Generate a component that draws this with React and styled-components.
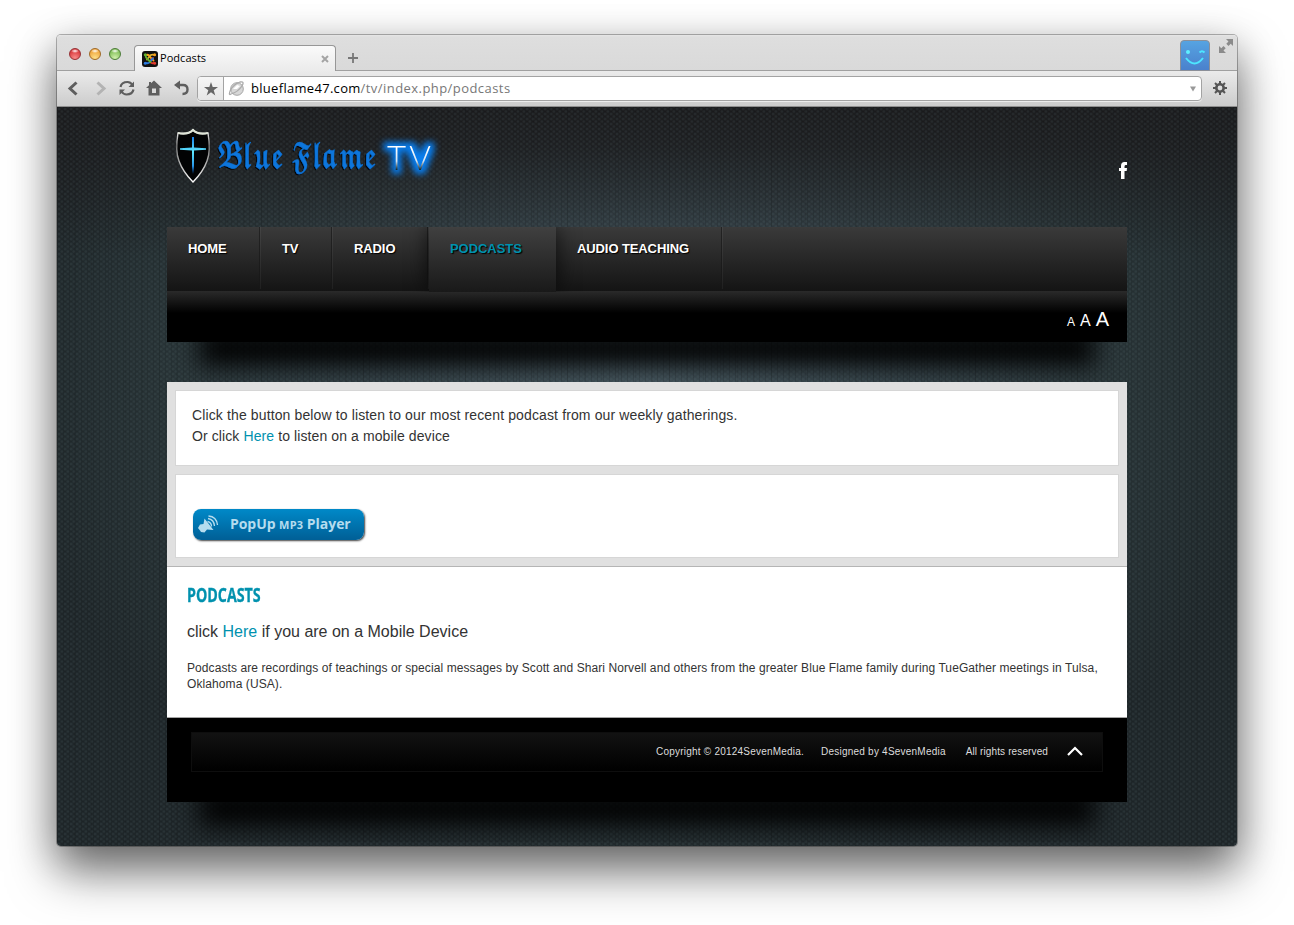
import React from "react";
import styled, { createGlobalStyle, css } from "styled-components";

const Global = createGlobalStyle`
  * { box-sizing: border-box; }
  html, body { margin: 0; background: #fff; }
  body { font-family: "Liberation Sans", Arial, sans-serif; overflow: hidden; }
  a { color: #0091ae; text-decoration: none; }
  p, h2 { margin: 0; }
`;

const Desktop = styled.div`
  width: 1294px;
  height: 925px;
  padding: 35px 57px 0;
  overflow: hidden;
`;

const Window = styled.div`
  width: 1180px;
  height: 811px;
  border-radius: 4px;
  overflow: hidden;
  display: flex;
  flex-direction: column;
  box-shadow: 0 0 0 1px rgba(0, 0, 0, 0.28), 0 26px 48px rgba(0, 0, 0, 0.5), 0 10px 40px rgba(0, 0, 0, 0.24);
`;

const TabStrip = styled.div`
  display: flex;
  align-items: flex-end;
  height: 36px;
  padding: 0 9px 0 12px;
  background: linear-gradient(#e6e6e6 0, #dedede 2px, #d9d9d9 100%);
  box-shadow: inset 0 -1px #a0a0a0;
`;

const Lights = styled.div`
  display: flex;
  gap: 8px;
  margin-bottom: 11px;
`;

const tints = {
  red: ["#f98c8a", "#d9363a", "#963034"],
  amber: ["#fde08a", "#f0a43a", "#a06a26"],
  green: ["#d2f1ae", "#7fbd55", "#4c7d38"],
};

const Light = styled.span`
  width: 12px;
  height: 12px;
  border-radius: 50%;
  border: 1px solid ${(p) => tints[p.$tint][2]};
  background: radial-gradient(ellipse 4px 2px at 50% 20%, #fff 0, transparent 100%),
    radial-gradient(circle at 50% 90%, ${(p) => tints[p.$tint][0]}, ${(p) => tints[p.$tint][1]} 75%);
`;

const Tab = styled.div`
  display: flex;
  align-items: center;
  width: 202px;
  height: 26px;
  margin-left: 13px;
  padding: 0 6px 0 7px;
  border: 1px solid #979797;
  border-bottom: 0;
  border-radius: 4px 4px 0 0;
  background: linear-gradient(#fafafa, #ebebeb);
  font: 11px/16px "Open Sans", "Noto Sans", sans-serif;
  letter-spacing: 0.05px;
  color: #000;
`;

const TabTitle = styled.span`
  flex: 1;
  margin: -2px 0 0 2px;
`;

const NewTab = styled.svg`
  margin: 0 auto 7px 12px;
`;

const Wink = styled.svg`
  margin-right: 9px;
`;

const Expand = styled.svg`
  margin: 0 -6px 17px 0;
`;

const Toolbar = styled.div`
  display: flex;
  align-items: center;
  height: 36px;
  padding: 0 10px 1px;
  background: linear-gradient(#ebebeb, #cbcbcb);
  box-shadow: inset 0 -1px #8e8e8e;
`;

const NavIcons = styled.svg`
  flex: none;
  margin: -2px 1px 0 -1px;
`;

const Address = styled.div`
  display: flex;
  align-items: center;
  width: 1005px;
  height: 25px;
  margin: 0 11px 0 2px;
  border: 1px solid #a3a3a3;
  border-radius: 4px;
  background: #fff;
  box-shadow: 0 1px rgba(255, 255, 255, 0.6);
`;

const Bookmark = styled.span`
  display: flex;
  align-items: center;
  justify-content: center;
  width: 26px;
  height: 23px;
  border-right: 1px solid #a3a3a3;
  border-radius: 3px 0 0 3px;
  background: linear-gradient(#f6f6f6, #e6e6e6);
`;

const Url = styled.span`
  flex: 1;
  margin: -2px 0 0 5px;
  font: 13px/18px "Open Sans", "Noto Sans", sans-serif;
  letter-spacing: 0.44px;
  color: #777;
  b { font-weight: 400; color: #000; letter-spacing: 0.3px; }
`;

const Page = styled.div`
  flex: 1;
  padding: 0 110px;
  background:
    radial-gradient(ellipse 2.5px 2px at 2px 2px, rgba(130, 160, 165, 0.16), transparent) 0 0 / 6px 5px,
    radial-gradient(ellipse 2.5px 2px at 2px 2px, rgba(130, 160, 165, 0.16), transparent) 3px 2.5px / 6px 5px,
    repeating-linear-gradient(90deg, rgba(0, 0, 0, 0.12) 0 1px, transparent 1px 6px),
    repeating-linear-gradient(90deg, rgba(0, 0, 0, 0.07) 0 1px, transparent 1px 17px),
    linear-gradient(#1a1a1c 0, rgba(26, 26, 28, 0.88) 40px, rgba(26, 26, 28, 0) 150px),
    radial-gradient(ellipse 640px 500px at 50% 270px, #43535b 0, #323f45 40%, #263134 75%, #1d2427 100%);
`;

const Header = styled.header`
  display: flex;
  justify-content: space-between;
  height: 120px;
`;

const Logo = styled.svg`
  margin: 14px 0 0;
  overflow: visible;
`;

const Facebook = styled.svg`
  margin-top: 55px;
`;

const NavBar = styled.nav`
  display: flex;
  height: 64px;
  background: linear-gradient(#3a3a3a, #141414);
`;

const NavItem = styled.a`
  position: relative;
  width: ${(p) => p.$w}px;
  height: 64px;
  padding: 14px 0 0 21px;
  font-size: 13px;
  line-height: 15px;
  letter-spacing: -0.1px;
  font-weight: 700;
  color: #fff;
  text-shadow: 1px 1px 1px #000;
  ${(p) =>
    p.$active
      ? css`
          z-index: 1;
          height: 65px;
          color: #0091ae;
          letter-spacing: -0.05px;
          background: linear-gradient(#404040, #191919);
          box-shadow: 0 0 22px rgba(0, 0, 0, 0.75);
          clip-path: inset(0 -30px 0 -30px);
        `
      : css`
          background:
            linear-gradient(#232323, #161616) right 1px top / 1px 62px no-repeat,
            linear-gradient(#444, #202020) right top / 1px 62px no-repeat;
        `}
`;

const SubBar = styled.div`
  display: flex;
  align-items: baseline;
  justify-content: flex-end;
  gap: 5px;
  height: 51px;
  padding: 17px 18px 0 0;
  background: linear-gradient(#2a2a2a, #000 22px);
  color: #fff;
`;

const SizeLetter = styled.span`
  font-size: ${(p) => p.$size}px;
  line-height: 22px;
`;

const Shade = styled.div`
  height: 40px;
  overflow: hidden;
  &::before {
    content: "";
    display: block;
    height: 20px;
    margin: -20px 40px 0;
    box-shadow: 0 16px 24px 8px rgba(0, 0, 0, 0.95);
  }
`;

const Showcase = styled.section`
  display: flex;
  flex-direction: column;
  gap: 8px;
  height: 185px;
  padding: 8px;
  background: #e0e0e0;
  border-bottom: 1px solid #b5b5b5;
`;

const Card = styled.div`
  height: ${(p) => p.$h}px;
  padding: ${(p) => p.$pad};
  border: 1px solid #d6d6d6;
  background: #fff;
  font-size: 14px;
  line-height: 21px;
  letter-spacing: 0.125px;
  color: #333;
  p + p { letter-spacing: 0.1px; }
`;

const Player = styled.button`
  display: flex;
  align-items: center;
  width: 171px;
  height: 31px;
  padding: 0 0 2px 5px;
  border: 0;
  border-radius: 8px;
  background: linear-gradient(#0089c8, #005f96);
  box-shadow: 1px 1px 2px rgba(0, 0, 0, 0.75);
  color: #b5dcee;
  font: 700 14px "Open Sans", sans-serif;
  letter-spacing: -0.05px;
  white-space: nowrap;
  svg { margin-right: 11px; }
  small { font-size: 11px; letter-spacing: 0.2px; }
`;

const Article = styled.main`
  height: 151px;
  padding: 16px 20px 0;
  background: #fff;
  border-bottom: 1px solid #a5a5a5;
  color: #333;
`;

const Title = styled.h2`
  width: 110px;
  font: 700 19px/24px "Open Sans", sans-serif;
  -webkit-text-stroke: 0.3px #0091ae;
  color: #0091ae;
  transform: scaleX(0.75);
  transform-origin: left;
`;

const Lead = styled.p`
  margin-top: 15px;
  font-size: 16px;
  line-height: 20px;
`;

const Body = styled.p`
  margin-top: 18px;
  font-size: 12px;
  line-height: 16px;
  letter-spacing: 0.087px;
`;

const Footer = styled.footer`
  height: 84px;
  padding: 14px 24px 0;
  background: #000;
`;

const FooterBox = styled.div`
  display: flex;
  align-items: center;
  justify-content: flex-end;
  height: 40px;
  padding: 0 19px 2px 0;
  border: 1px solid #0e0e0e;
  background: linear-gradient(#121212, #000);
  color: #ddd;
  font-size: 10px;
  white-space: nowrap;
`;

const Note = styled.span`
  margin-right: ${(p) => p.$gap}px;
  letter-spacing: ${(p) => p.$track}px;
`;

const nav = [
  ["HOME", 94],
  ["TV", 72],
  ["RADIO", 96],
  ["PODCASTS", 127, true],
  ["AUDIO TEACHING", 167],
];

export default function App() {
  return (
    <Desktop>
      <Global />
      <Window>
        <TabStrip>
          <Lights>
            <Light $tint="red" />
            <Light $tint="amber" />
            <Light $tint="green" />
          </Lights>
          <Tab>
            <svg width="16" height="16" viewBox="0 0 16 16">
              <rect width="16" height="16" rx="3" fill="#111" />
              <g fill="none" strokeWidth="1.800" strokeLinecap="round">
                <path d="M3.500 4Q7 3 8 6l3.500 3.500" stroke="#f9a01b" />
                <path d="M12.500 4Q9 3 7.500 5.500L5 8.500" stroke="#e2b22e" />
                <path d="M12.500 12Q9 13 8 10.500L11 7" stroke="#e23a2e" />
                <path d="M3.500 12Q7 13 8 10.500l3-3" stroke="#2d7be0" />
                <path d="M3.500 4Q3.500 7 5.500 8l3 3" stroke="#62b22f" />
              </g>
              <circle cx="3.300" cy="3.800" r="1.500" fill="#62b22f" />
              <circle cx="12.600" cy="3.800" r="1.500" fill="#f9a01b" />
              <circle cx="3.300" cy="12.200" r="1.500" fill="#2d7be0" />
              <circle cx="12.600" cy="12.200" r="1.500" fill="#e23a2e" />
            </svg>
            <TabTitle>Podcasts</TabTitle>
            <svg width="8" height="8" viewBox="0 0 8 8">
              <path d="M1 1l6 6M7 1l-6 6" stroke="#a4a4a4" strokeWidth="2" />
            </svg>
          </Tab>
          <NewTab width="10" height="12" viewBox="0 0 10 12">
            <path d="M5 1v10M0 6h10" stroke="#777" strokeWidth="1.800" />
          </NewTab>
          <Wink width="30" height="31" viewBox="0 0 30 31">
            <defs>
              <linearGradient id="wink" x2="0" y2="1">
                <stop stopColor="#56a4e2" />
                <stop offset="1" stopColor="#4a80cc" />
              </linearGradient>
            </defs>
            <path d="M.5 30.500V4q0-3.500 3.500-3.500h22q3.500 0 3.500 3.500v26.500z" fill="url(#wink)" stroke="#8b8f98" />
            <circle cx="8" cy="12" r="2" fill="#5ff0ff" />
            <path d="M19.500 12.500q2.500-2.500 5 0M6 18q8.500 11 17 0" fill="none" stroke="#4de6ff" strokeWidth="2" />
          </Wink>
          <Expand width="15" height="15" viewBox="0 0 15 15" fill="#8b8b8b">
            <path d="M7 0h7v7l-2.300-2.300-2.200 2.200-2.200-2.200 2.200-2.200zM0 7l2.300 2.300 2.200-2.200 2.200 2.200-2.200 2.200L7 14H0z" />
          </Expand>
        </TabStrip>

        <Toolbar>
          <NavIcons width="128" height="20" viewBox="0 0 128 20" fill="none" strokeWidth="3">
            <path d="M10.500 4.500L4 10.500l6.500 6" stroke="#5e5e5e" />
            <path d="M31.500 4.500L38 10.500l-6.500 6" stroke="#b3b3b3" />
            <g stroke="#5e5e5e" strokeWidth="2.200">
              <path d="M54.500 9q1-5 7-5 3 0 5 3M67.500 11.500q-1 5-7 5-3 0-5-3" />
              <path d="M68 3.500V9h-5.500zM53.500 17v-5.500H59z" fill="#5e5e5e" stroke="none" />
            </g>
            <path
              d="M88 2.500l8 7.500h-2.500v7.500h-11V10H80l3-2.800V4h2v1.300zM86 10.500v4.500h4v-4.500z"
              fill="#5e5e5e"
              fillRule="evenodd"
            />
            <path d="M112 7h5q4.500 0 4.500 4.500t-5 4.500" stroke="#5e5e5e" strokeWidth="2.400" />
            <path d="M108 7l6-4.500v9z" fill="#5e5e5e" />
          </NavIcons>
          <Address>
            <Bookmark>
              <svg width="14" height="14" viewBox="0 0 14 14">
                <path d="M7 0l1.700 5H14L9.700 8.200l1.600 5.300L7 10.300l-4.300 3.200 1.600-5.300L0 5h5.300z" fill="#666" />
              </svg>
            </Bookmark>
            <svg width="22" height="18" viewBox="0 0 22 18">
              <circle cx="13" cy="9" r="6.300" fill="#d7d7d7" stroke="#a5a5a5" />
              <path d="M7 14Q4 16 6.500 10 10 4 16 2q5-1 2 4-4 6-11 8z" fill="none" stroke="#aaa" strokeWidth="1.300" />
              <path d="M9 9l4-4 3 1-3 3z" fill="#fff" />
            </svg>
            <Url>
              <b>blueflame47.com</b>/tv/index.php/podcasts
            </Url>
            <svg width="12" height="8" viewBox="0 0 12 8">
              <path d="M1 1.500h6L4 6.500z" fill="#999" />
            </svg>
          </Address>
          <svg width="14" height="16" viewBox="0 0 14 16" fill="none" stroke="#555">
            <circle cx="7" cy="7" r="3.700" strokeWidth="2.600" />
            <path
              d="M7 0v3M7 11v3M0 7h3M11 7h3M2 2l2.200 2.200M9.800 9.800L12 12M12 2L9.800 4.200M4.200 9.800L2 12"
              strokeWidth="2"
            />
          </svg>
        </Toolbar>

        <Page>
          <Header>
            <Logo width="280" height="70" viewBox="0 0 280 70">
              <defs>
                <linearGradient id="rim" x2="0" y2="1">
                  <stop stopColor="#fff" />
                  <stop offset=".3" stopColor="#777" />
                  <stop offset=".6" stopColor="#aaa" />
                  <stop offset="1" stopColor="#fff" />
                </linearGradient>
                <linearGradient id="cross" x2="0" y2="1">
                  <stop stopColor="#167ce8" />
                  <stop offset=".4" stopColor="#5fe9ff" />
                  <stop offset="1" stopColor="#0868dd" />
                </linearGradient>
                <linearGradient id="tv" x1="0" x2="0" y1="27" y2="49" gradientUnits="userSpaceOnUse">
                  <stop stopColor="#fff" />
                  <stop offset=".6" stopColor="#d5e4f2" />
                  <stop offset="1" stopColor="#122" />
                </linearGradient>
                <filter id="glow" x="-40%" y="-60%" width="180%" height="220%" colorInterpolationFilters="sRGB">
                  <feMorphology in="SourceAlpha" operator="dilate" radius="4" />
                  <feGaussianBlur stdDeviation="3.200" result="halo" />
                  <feFlood floodColor="#087ef0" />
                  <feComposite in2="halo" operator="in" />
                  <feMerge>
                    <feMergeNode />
                    <feMergeNode in="SourceGraphic" />
                  </feMerge>
                </filter>
                <filter id="ink" x="-10%" y="-10%" width="120%" height="120%">
                  <feDropShadow dx="-1" dy="1" stdDeviation=".7" floodColor="#000" floodOpacity=".9" />
                </filter>
              </defs>
              <path
                d="M26 9q-5 5-15 3-3 18 1 28 4 11 14 21 10-10 14-21 4-10 1-28-10 2-15-3z"
                fill="#020304"
                stroke="url(#rim)"
                strokeWidth="1.400"
              />
              <path d="M11 12q10 2 15-3 5 5 15 3" fill="none" stroke="#dfe5d8" strokeWidth="2.200" />
              <path d="M25 16h2v10.500l12 .8v1.400l-12 .8V45l-1 8-1-8V29.500l-12-.8v-1.400l12-.8z" fill="url(#cross)" />
              <text
                x="50"
                y="47"
                textLength="160"
                lengthAdjust="spacingAndGlyphs"
                fontFamily="'DejaVu Math TeX Gyre', 'DejaVu Sans', 'Liberation Serif', serif"
                fontSize="34"
                fill="#0b76dc"
                stroke="#0b6fd0"
                strokeWidth=".6"
                filter="url(#ink)"
              >
                𝕭𝖑𝖚𝖊 𝕱𝖑𝖆𝖒𝖊
              </text>
              <text
                x="220"
                y="49"
                textLength="44"
                lengthAdjust="spacing"
                fontFamily="Lato, sans-serif"
                fontWeight="300"
                fontSize="33"
                fill="url(#tv)"
                filter="url(#glow)"
              >
                TV
              </text>
            </Logo>
            <Facebook width="8" height="17" viewBox="0 0 8 17">
              <path d="M2 17V9H0V6h2V4Q2 0 5.500 0H8v3H6.500Q5.500 3 5.500 4.500V6H8L7.700 9H5.500v8z" fill="#fff" />
            </Facebook>
          </Header>
          <NavBar>
            {nav.map(([label, w, active]) => (
              <NavItem key={label} $w={w} $active={active}>
                {label}
              </NavItem>
            ))}
          </NavBar>
          <SubBar>
            <SizeLetter $size={12}>A</SizeLetter>
            <SizeLetter $size={16}>A</SizeLetter>
            <SizeLetter $size={20}>A</SizeLetter>
          </SubBar>
          <Shade />
          <Showcase>
            <Card $h={76} $pad="14px 16px">
              <p>Click the button below to listen to our most recent podcast from our weekly gatherings.</p>
              <p>
                Or click <a>Here</a> to listen on a mobile device
              </p>
            </Card>
            <Card $h={84} $pad="34px 17px">
              <Player>
                <svg width="21" height="20" viewBox="0 0 21 20">
                  <path d="M6.500 4.500l9 11.500-6.500-.5-2.500 3-3.500-.5-1-1.500L0 14l2-3.500 3.500-.5z" fill="#b5dcee" />
                  <path d="M9.500 7.500q4 1 4 5M10 4.500q6 1 6.500 7.500M10.500 2q8 .5 9 9" fill="none" stroke="#b5dcee" strokeWidth="1.300" />
                </svg>
                <span>
                  PopUp <small>MP3</small> Player
                </span>
              </Player>
            </Card>
          </Showcase>
          <Article>
            <Title>PODCASTS</Title>
            <Lead>
              click <a>Here</a> if you are on a Mobile Device
            </Lead>
            <Body>
              Podcasts are recordings of teachings or special messages by Scott and Shari Norvell and others from the
              greater Blue Flame family during TueGather meetings in Tulsa, Oklahoma (USA).
            </Body>
          </Article>
          <Footer>
            <FooterBox>
              <Note $gap={17} $track={0.22}>Copyright © 20124SevenMedia.</Note>
              <Note $gap={20} $track={0.22}>Designed by 4SevenMedia</Note>
              <Note $gap={19} $track={0.12}>All rights reserved</Note>
              <svg width="16" height="10" viewBox="0 0 16 10">
                <path d="M1 9l7-7 7 7" fill="none" stroke="#fff" strokeWidth="2.200" />
              </svg>
            </FooterBox>
          </Footer>
          <Shade />
        </Page>
      </Window>
    </Desktop>
  );
}
